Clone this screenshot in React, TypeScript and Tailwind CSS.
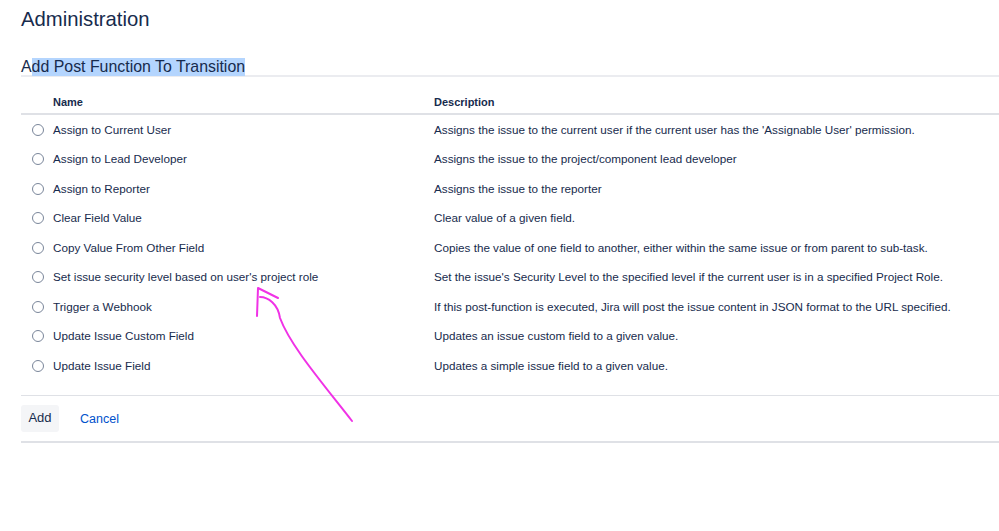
import React from "react";

const rows: [string, string][] = [
  ["Assign to Current User", "Assigns the issue to the current user if the current user has the 'Assignable User' permission."],
  ["Assign to Lead Developer", "Assigns the issue to the project/component lead developer"],
  ["Assign to Reporter", "Assigns the issue to the reporter"],
  ["Clear Field Value", "Clear value of a given field."],
  ["Copy Value From Other Field", "Copies the value of one field to another, either within the same issue or from parent to sub-task."],
  ["Set issue security level based on user's project role", "Set the issue's Security Level to the specified level if the current user is in a specified Project Role."],
  ["Trigger a Webhook", "If this post-function is executed, Jira will post the issue content in JSON format to the URL specified."],
  ["Update Issue Custom Field", "Updates an issue custom field to a given value."],
  ["Update Issue Field", "Updates a simple issue field to a given value."],
];

export default function App() {
  return (
    <div
      className="relative w-[999px] h-[531px] bg-white overflow-hidden text-[#172B4D]"
      style={{ fontFamily: "'Liberation Sans', Arial, sans-serif" }}
    >
      <div className="pl-[21px]">
        <h1 className="text-[20.3px] leading-[24px] pt-[7px] font-normal">Administration</h1>
        <div className="mt-[25px] border-b-2 border-[#EBECF0] h-[21px]">
          <h2 className="text-[15.9px] leading-[21px] font-normal">
            A<span className="bg-[#B4D5FE] pb-[1px]">dd Post Function To Transition</span>
          </h2>
        </div>
        <div className="mt-[16px]">
          <div className="flex h-[22px] items-start border-b-2 border-[#DFE1E6] text-[11px] font-bold leading-[14px] pt-[2px]">
            <div className="w-[32px] shrink-0" />
            <div className="w-[381px] shrink-0">Name</div>
            <div>Description</div>
          </div>
          <div className="pb-[14px] border-b border-[#DFE1E6]">
            {rows.map(([n, d]) => (
              <div key={n} className="flex items-center h-[29.5px] text-[11.7px] leading-[16px]">
                <div className="w-[32px] shrink-0 flex justify-center pl-[2px]">
                  <span className="block w-[12px] h-[12px] rounded-full border border-[#7A869A] bg-white" />
                </div>
                <div className="w-[381px] shrink-0">{n}</div>
                <div className="whitespace-nowrap">{d}</div>
              </div>
            ))}
          </div>
          <div className="flex items-start h-[47px] border-b-2 border-[#DFE1E6] pt-[9px]">
            <button className="h-[27px] w-[38px] rounded-[3px] bg-[#F4F5F7] text-[13px] text-[#172B4D]">Add</button>
            <span className="ml-[21px] mt-[6px] text-[12.5px] leading-[16px] text-[#0052CC]">Cancel</span>
          </div>
        </div>
      </div>
      <svg className="absolute left-0 top-0 pointer-events-none" width="999" height="531" viewBox="0 0 999 531" fill="none">
        <path d="M257 316 L258 288 L278 298" stroke="#F032E6" strokeWidth="2" strokeLinecap="round" strokeLinejoin="round" />
        <path d="M260 297 C268 297 278 304 280 318 C290 345 320 380 352 421" stroke="#F032E6" strokeWidth="2" strokeLinecap="round" />
      </svg>
    </div>
  );
}
